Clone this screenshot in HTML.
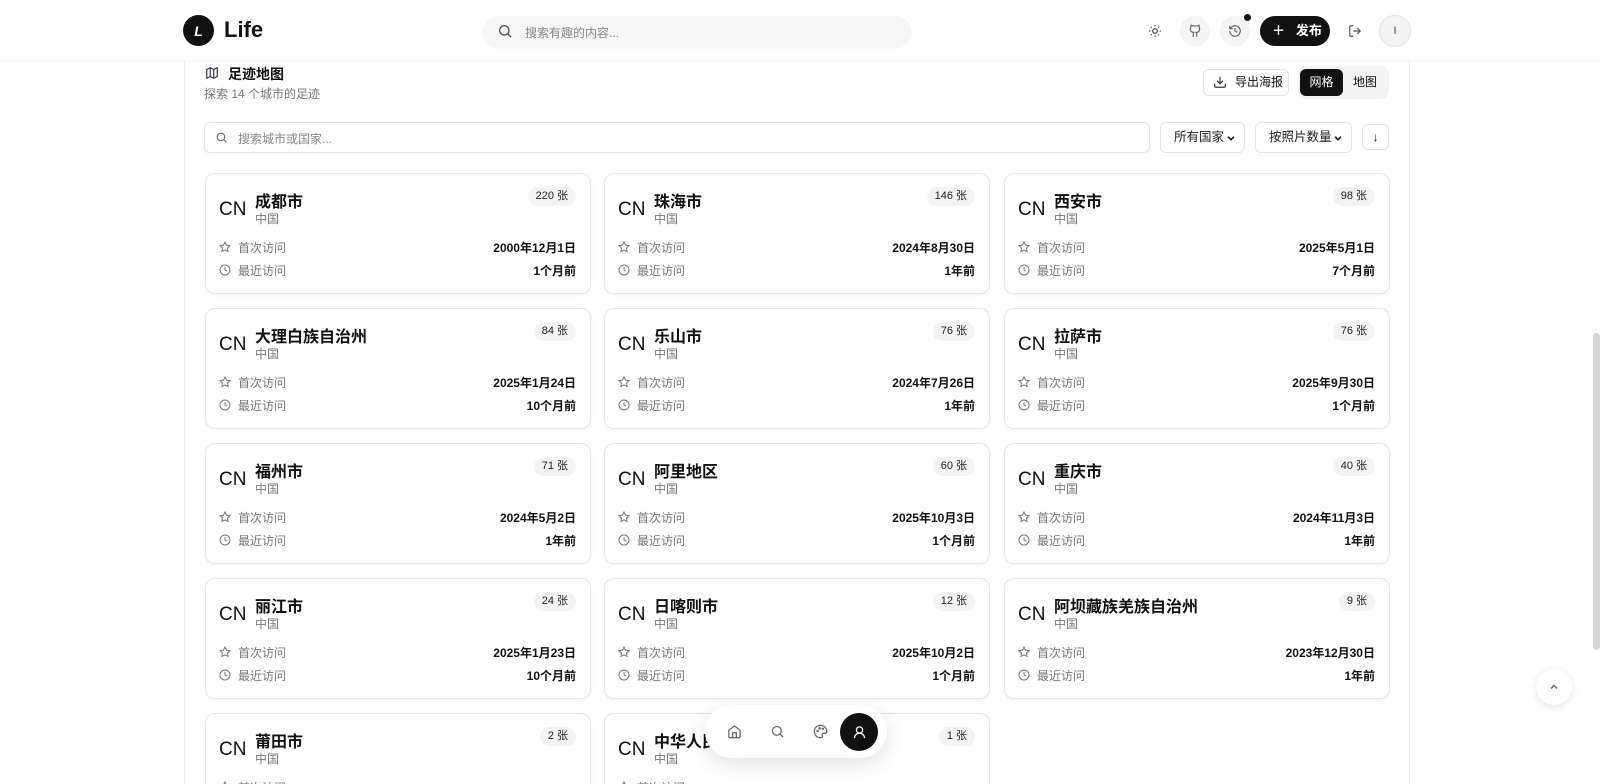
<!DOCTYPE html>
<html><head><meta charset="utf-8"><style>
*{box-sizing:border-box;margin:0;padding:0}
html,body{width:1600px;height:784px;overflow:hidden}
body{background:#fff;font-family:"Liberation Sans","Noto Sans CJK SC",sans-serif;color:#111;position:relative}
.abs{position:absolute}
header{position:absolute;left:0;top:0;width:1600px;height:60px;background:#fff;box-shadow:0 1px 3px rgba(0,0,0,.04);z-index:5}
.panel{position:absolute;left:184px;top:60px;width:1226px;height:724px;border-left:1px solid #eee;border-right:1px solid #eee;background:#fff}
.card{position:absolute;width:386px;height:121px;border:1px solid #e6e6e6;border-radius:10px;background:#fff;box-shadow:0 1px 3px rgba(0,0,0,.06)}
.cn{position:absolute;left:13px;top:25px;font-size:19px;color:#111}
.name{position:absolute;left:49px;top:14px;font-size:16px;font-weight:bold}
.ctry{position:absolute;left:49px;top:36px;font-size:12px;color:#777}
.badge{position:absolute;right:14px;top:13px;height:19px;padding:0 8px;border-radius:10px;background:#f3f3f3;font-size:11px;line-height:19px;color:#222}
.row{position:absolute;left:13px;right:14px;height:16px;font-size:12px;color:#777;display:flex;align-items:center}
.row svg{margin-right:7px}
.row b{margin-left:auto;color:#111;font-weight:bold}
.sel{position:absolute;top:122px;height:31px;border:1px solid #e5e5e5;border-radius:6px;font-size:12.5px;line-height:29px;padding-left:13px;color:#222}
.sel svg{position:absolute;right:8px;top:10px}
.circ{position:absolute;border-radius:50%;display:flex;align-items:center;justify-content:center}
</style></head><body>
<header>
<div class="circ" style="left:183px;top:15px;width:31px;height:31px;background:#111;color:#fff;font-weight:bold;font-style:italic;font-size:14px">L</div>
<div class="abs" style="left:224px;top:17px;font-size:22px;font-weight:bold">Life</div>
<div class="abs" style="left:483px;top:16px;width:428px;height:31px;border-radius:16px;background:#f6f6f6;box-shadow:0 1px 2px rgba(0,0,0,.06)"></div>
<svg class="abs" style="left:497px;top:23px" width="16" height="16" viewBox="0 0 24 24" fill="none" stroke="#555" stroke-width="2"><circle cx="11" cy="11" r="7"/><path d="M21 21l-5-5"/></svg>
<div class="abs" style="left:525px;top:24px;font-size:12px;color:#888">搜索有趣的内容...</div>
<svg class="abs" style="left:1148px;top:24px" width="14" height="14" viewBox="0 0 24 24" fill="none" stroke="#333" stroke-width="2"><circle cx="12" cy="12" r="4"/><path d="M12 2v2M12 20v2M4.9 4.9l1.4 1.4M17.7 17.7l1.4 1.4M2 12h2M20 12h2M4.9 19.1l1.4-1.4M17.7 6.3l1.4-1.4"/></svg>
<div class="circ" style="left:1180px;top:16px;width:30px;height:30px;background:#f4f4f4"><svg width="14" height="14" viewBox="0 0 24 24" fill="none" stroke="#666" stroke-width="2"><path d="M15 22v-4a4.8 4.8 0 0 0-1-3.5c3 0 6-2 6-5.5.1-1.3-.3-2.5-1-3.5.3-1.2.3-2.4 0-3.5 0 0-1 0-3 1.5-2.6-.5-5.4-.5-8 0C6 2 5 2 5 2c-.3 1.1-.3 2.3 0 3.5A5.4 5.4 0 0 0 4 9c0 3.5 3 5.5 6 5.5-.4.5-.7 1-.8 1.6-.2.6-.3 1.200-.2 1.9v4"/></svg></div>
<div class="circ" style="left:1220px;top:16px;width:30px;height:30px;background:#f4f4f4"><svg width="14" height="14" viewBox="0 0 24 24" fill="none" stroke="#666" stroke-width="2"><path d="M3 12a9 9 0 1 0 3-6.7L3 8"/><path d="M3 3v5h5M12 7v5l4 2"/></svg></div>
<div class="circ" style="left:1244px;top:14px;width:7px;height:7px;background:#111"></div>
<div class="abs" style="left:1260px;top:16px;width:70px;height:30px;border-radius:15px;background:#111;color:#fff;font-size:13px;font-weight:bold;line-height:30px;padding-left:12px">＋&nbsp;&nbsp;&nbsp;发布</div>
<svg class="abs" style="left:1348px;top:24px" width="14" height="14" viewBox="0 0 24 24" fill="none" stroke="#555" stroke-width="2"><path d="M9 21H5a2 2 0 0 1-2-2V5a2 2 0 0 1 2-2h4M16 17l5-5-5-5M21 12H9"/></svg>
<div class="circ" style="left:1379px;top:15px;width:32px;height:32px;background:#f4f4f4;border:1px solid #e3e3e3;font-size:11px;color:#444">I</div>
</header>
<div class="panel"></div>
<svg class="abs" style="left:205px;top:66px" width="14" height="14" viewBox="0 0 24 24" fill="none" stroke="#334" stroke-width="2"><path d="M3 6l6-3 6 3 6-3v15l-6 3-6-3-6 3z M9 3v15M15 6v15"/></svg>
<div class="abs" style="left:228px;top:64px;font-size:14px;font-weight:bold">足迹地图</div>
<div class="abs" style="left:204px;top:85px;font-size:12px;color:#777">探索 14 个城市的足迹</div>
<div class="abs" style="left:1203px;top:69px;width:86px;height:27px;border:1px solid #e5e5e5;border-radius:6px;font-size:12px;line-height:25px;padding-left:31px">导出海报</div>
<svg class="abs" style="left:1213px;top:75px" width="14" height="14" viewBox="0 0 24 24" fill="none" stroke="#333" stroke-width="2"><path d="M21 15v4a2 2 0 0 1-2 2H5a2 2 0 0 1-2-2v-4M7 10l5 5 5-5M12 15V3"/></svg>
<div class="abs" style="left:1298px;top:66px;width:91px;height:33px;border-radius:8px;background:#f3f3f3"></div>
<div class="abs" style="left:1300px;top:69px;width:43px;height:27px;border-radius:6px;background:#111;color:#fff;font-size:12px;line-height:27px;text-align:center">网格</div>
<div class="abs" style="left:1343px;top:69px;width:44px;height:27px;font-size:12px;line-height:27px;text-align:center">地图</div>
<div class="abs" style="left:204px;top:122px;width:946px;height:31px;border:1px solid #e5e5e5;border-radius:6px;box-shadow:0 1px 2px rgba(0,0,0,.04)"></div>
<svg class="abs" style="left:215px;top:131px" width="13" height="13" viewBox="0 0 24 24" fill="none" stroke="#666" stroke-width="2"><circle cx="11" cy="11" r="7"/><path d="M21 21l-5-5"/></svg>
<div class="abs" style="left:238px;top:130px;font-size:12px;color:#888">搜索城市或国家...</div>
<div class="sel" style="left:1160px;width:85px">所有国家<svg width="10" height="10" viewBox="0 0 24 24" fill="none" stroke="#222" stroke-width="4"><path d="M5 9l7 7 7-7"/></svg></div>
<div class="sel" style="left:1255px;width:97px">按照片数量<svg width="10" height="10" viewBox="0 0 24 24" fill="none" stroke="#222" stroke-width="4"><path d="M5 9l7 7 7-7"/></svg></div>
<div class="abs" style="left:1362px;top:124px;width:27px;height:26px;border:1px solid #e5e5e5;border-radius:6px;font-size:12px;text-align:center;line-height:24px">↓</div>
<div id="cards"></div>
<script>
const d=[["成都市","220 张","2000年12月1日","1个月前"],["珠海市","146 张","2024年8月30日","1年前"],["西安市","98 张","2025年5月1日","7个月前"],
["大理白族自治州","84 张","2025年1月24日","10个月前"],["乐山市","76 张","2024年7月26日","1年前"],["拉萨市","76 张","2025年9月30日","1个月前"],
["福州市","71 张","2024年5月2日","1年前"],["阿里地区","60 张","2025年10月3日","1个月前"],["重庆市","40 张","2024年11月3日","1年前"],
["丽江市","24 张","2025年1月23日","10个月前"],["日喀则市","12 张","2025年10月2日","1个月前"],["阿坝藏族羌族自治州","9 张","2023年12月30日","1年前"],
["莆田市","2 张","",""],["中华人民共和国","1 张","",""]];
const xs=[205,604,1004],ys=[173,308,443,578,713];
const star='<svg width="12" height="12" viewBox="0 0 24 24" fill="none" stroke="#777" stroke-width="2"><path d="M12 2l3.1 6.3 6.9 1-5 4.9 1.2 6.8L12 17.8 5.8 21l1.2-6.8-5-4.9 6.9-1z"/></svg>';
const clk='<svg width="12" height="12" viewBox="0 0 24 24" fill="none" stroke="#777" stroke-width="2"><circle cx="12" cy="12" r="10"/><path d="M12 6v6l4 2"/></svg>';
let h='';d.forEach((c,i)=>{h+=`<div class="card" style="left:${xs[i%3]}px;top:${ys[Math.floor(i/3)]}px"><div class="cn">CN</div><div class="name">${c[0]}</div><div class="ctry">中国</div><div class="badge">${c[1]}</div><div class="row" style="top:65px">${star}首次访问<b>${c[2]}</b></div><div class="row" style="top:88px">${clk}最近访问<b>${c[3]}</b></div></div>`});
document.getElementById('cards').innerHTML=h;
</script>
<div class="abs" style="left:705px;top:705px;width:182px;height:53px;border-radius:27px;background:#fff;box-shadow:0 6px 20px rgba(0,0,0,.12);z-index:6">
<svg class="abs" style="left:22px;top:19px" width="15" height="15" viewBox="0 0 24 24" fill="none" stroke="#666" stroke-width="2"><path d="M3 10l9-7 9 7v10a2 2 0 0 1-2 2H5a2 2 0 0 1-2-2z"/><path d="M9 22v-8h6v8"/></svg>
<svg class="abs" style="left:65px;top:19px" width="15" height="15" viewBox="0 0 24 24" fill="none" stroke="#666" stroke-width="2"><circle cx="11" cy="11" r="7"/><path d="M21 21l-5-5"/></svg>
<svg class="abs" style="left:108px;top:19px" width="15" height="15" viewBox="0 0 24 24" fill="none" stroke="#666" stroke-width="2"><path d="M12 22a10 10 0 1 1 10-10c0 3-3 3-5 3s-3 2-2 4-1 3-3 3z"/><circle cx="7.5" cy="11" r="1"/><circle cx="10.5" cy="7" r="1"/><circle cx="15.5" cy="7.5" r="1"/></svg>
<div class="circ" style="left:135px;top:8px;width:38px;height:38px;background:#111"><svg width="15" height="15" viewBox="0 0 24 24" fill="none" stroke="#fff" stroke-width="2"><circle cx="12" cy="8" r="5"/><path d="M20 21a8 8 0 0 0-16 0"/></svg></div>
</div>
<div class="circ" style="left:1536px;top:669px;width:36px;height:36px;background:#fff;box-shadow:0 2px 8px rgba(0,0,0,.12)"><svg width="12" height="12" viewBox="0 0 24 24" fill="none" stroke="#555" stroke-width="2.5"><path d="M6 15l6-6 6 6"/></svg></div>
<div class="abs" style="left:1593px;top:333px;width:7px;height:317px;border-radius:4px;background:#d6d6d6"></div>
</body></html>
